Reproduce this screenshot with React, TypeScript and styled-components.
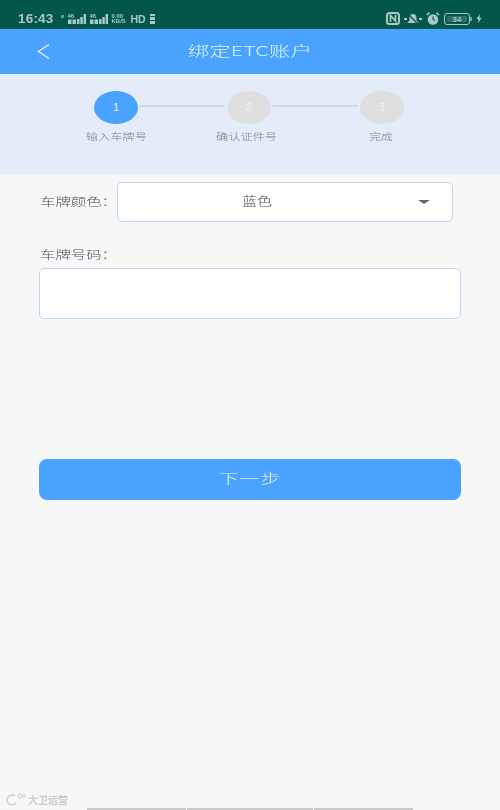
import React from "react";
import styled, { createGlobalStyle } from "styled-components";

const Global = createGlobalStyle`
  html, body { margin: 0; padding: 0; background: #f7f7f7; }
  body { font-family: "Noto Sans CJK SC", "Liberation Sans", sans-serif; }
  * { box-sizing: border-box; }
`;

const Page = styled.div`
  width: 500px;
  height: 810px;
  display: flex;
  flex-direction: column;
  background: #f7f7f7;
  overflow: hidden;
`;

const StatusBar = styled.div`
  height: 29px;
  flex: none;
  background: #03564a;
  color: #a9c9c2;
  display: flex;
  align-items: center;
  padding: 8px 18px 0 18px;
  justify-content: space-between;
  filter: blur(0.4px);
`;

const StatusGroup = styled.div<{ $gap: number }>`
  display: flex;
  align-items: center;
  gap: ${(p) => p.$gap}px;
`;

const Clock = styled.span`
  font-family: "Liberation Sans", sans-serif;
  font-size: 13.5px;
  font-weight: 700;
  letter-spacing: 0.2px;
  margin-right: 3px;
`;

const Hd = styled.span`
  font-family: "Liberation Sans", sans-serif;
  font-size: 10.5px;
  font-weight: 700;
  margin-left: -1px;
`;

const Header = styled.header`
  height: 45px;
  flex: none;
  background: #4aa3ff;
  display: flex;
  align-items: center;
  justify-content: center;
  position: relative;
`;

const BackButton = styled.span`
  position: absolute;
  left: 37px;
  top: 14px;
  display: flex;
`;

const Stretched = styled.span<{ $sx?: number }>`
  display: inline-block;
  transform: scaleX(${(p) => p.$sx ?? 1.25});
  white-space: nowrap;
`;

const LeftStretched = styled(Stretched)`
  transform-origin: left center;
`;

const Title = styled.h1`
  margin: 0 0 4px 0;
  color: #e6f2ff;
  font-size: 13.5px;
  font-weight: 300;
  line-height: 18px;
  filter: blur(0.25px);
`;

const Steps = styled.section`
  height: 100px;
  flex: none;
  background: #e3ecf8;
  display: flex;
  justify-content: center;
  padding: 17px 2px 0 0;
`;

const Step = styled.div`
  width: 44px;
  display: flex;
  flex-direction: column;
  align-items: center;
  position: relative;
`;

const Circle = styled.div<{ $active?: boolean }>`
  width: 44px;
  height: 33px;
  border-radius: 50%;
  background: ${(p) => (p.$active ? "#4aa3ff" : "#dfdfdf")};
  color: #f3f6fa;
  font-family: "Liberation Sans", sans-serif;
  font-size: 10px;
  display: flex;
  align-items: center;
  justify-content: center;
`;

const StepLabel = styled.div<{ $shift?: number }>`
  margin-top: 6px;
  margin-left: ${(p) => p.$shift ?? 0}px;
  font-size: 9px;
  line-height: 14px;
  color: #7d8288;
  font-weight: 300;
  white-space: nowrap;
  filter: blur(0.25px);
`;

const Connector = styled.div`
  width: 89px;
  height: 2px;
  margin-top: 14px;
  background: linear-gradient(to right, transparent 2px, #d3dae2 2px, #d3dae2 87px, transparent 87px);
`;

const Form = styled.main`
  flex: 1;
  display: flex;
  flex-direction: column;
  padding: 8px 39px 0 39px;
  position: relative;
`;

const ColorRow = styled.div`
  display: flex;
  align-items: center;
  height: 40px;
`;

const FieldLabel = styled.label`
  width: 78px;
  padding-left: 1px;
  padding-bottom: 2px;
  font-size: 11px;
  line-height: 16px;
  color: #4d5054;
  font-weight: 300;
  filter: blur(0.2px);
`;

const Select = styled.div`
  width: 336px;
  height: 40px;
  background: #fff;
  border: 1px solid #bcd8f5;
  border-radius: 5px;
  display: flex;
  align-items: center;
  justify-content: center;
  position: relative;
  font-size: 12px;
  font-weight: 300;
  color: #44474b;
  padding: 0 56px 3px 0;
  filter: blur(0.15px);
`;

const Caret = styled.span`
  position: absolute;
  right: 22px;
  top: 17px;
  width: 0;
  height: 0;
  border-left: 6px solid transparent;
  border-right: 6px solid transparent;
  border-top: 4px solid #66696d;
`;

const PlateLabel = styled(FieldLabel)`
  display: block;
  width: auto;
  margin-top: 24px;
  padding-bottom: 0;
`;

const PlateInput = styled.div`
  height: 51px;
  width: 422px;
  margin-top: 6px;
  background: #fff;
  border: 1px solid #bcd8f5;
  border-radius: 5px;
`;

const NextButton = styled.button`
  width: 422px;
  height: 41px;
  margin-top: 140px;
  padding: 0 0 4px 0;
  border: 0;
  border-radius: 8px;
  background: #4aa3ff;
  color: #e6f2ff;
  font-family: inherit;
  font-size: 13px;
  font-weight: 300;
  display: flex;
  align-items: center;
  justify-content: center;
`;

const Watermark = styled.div`
  position: absolute;
  left: 6px;
  bottom: 4px;
  display: flex;
  align-items: center;
  gap: 2px;
  color: #cbcbcb;
  font-size: 10px;
  line-height: 12px;
  filter: blur(0.4px);
`;

const WatermarkText = styled(Stretched)`
  font-weight: 700;
`;

const HomeBar = styled.div`
  position: absolute;
  left: 87px;
  bottom: 0;
  width: 326px;
  height: 2px;
  display: grid;
  grid-template-columns: 99px 126px 99px;
  gap: 1px;
`;

const HomeSegment = styled.span`
  background: #c9c9c9;
`;

const MiniLabel = styled.span`
  font-family: "Liberation Sans", sans-serif;
  font-size: 6px;
  line-height: 5px;
  font-weight: 700;
  white-space: nowrap;
`;

const SignalWrap = styled.span<{ $w: number }>`
  display: flex;
  flex-direction: column;
  width: ${(p) => p.$w}px;
`;

const Signal = ({ bars }: { bars: number[] }) => (
  <StatusGroup $gap={1}>
    <SignalWrap $w={8}>
      <MiniLabel>46</MiniLabel>
      <svg width="8" height="5" viewBox="0 0 8 5">
        <rect x="0" y="0.5" width="3.5" height="4.5" fill="currentColor" />
        <rect x="4.5" y="0.5" width="3.5" height="4.5" fill="currentColor" />
      </svg>
    </SignalWrap>
    <svg width="9" height="10" viewBox="0 0 9 10">
      {bars.map((h, i) => (
        <rect key={i} x={i * 3.3} y={10 - h} width="2.500" height={h} fill="currentColor" />
      ))}
    </svg>
  </StatusGroup>
);

export default function App() {
  return (
    <Page>
      <Global />
      <StatusBar>
        <StatusGroup $gap={4}>
          <Clock>16:43</Clock>
          <svg width="3" height="8" viewBox="0 0 3 8">
            <rect y="0" width="3" height="3" fill="currentColor" opacity="0.6" />
          </svg>
          <Signal bars={[5, 7, 10]} />
          <Signal bars={[5, 7, 10]} />
          <SignalWrap $w={16}>
            <MiniLabel>0.00</MiniLabel>
            <MiniLabel>KB/S</MiniLabel>
          </SignalWrap>
          <Hd>HD</Hd>
          <SignalWrap $w={5}>
            <svg width="5" height="10" viewBox="0 0 5 10" fill="currentColor">
              <rect x="0" y="0" width="5" height="2" />
              <rect x="0" y="3" width="5" height="3" />
              <rect x="0" y="7" width="5" height="3" />
            </svg>
          </SignalWrap>
        </StatusGroup>
        <StatusGroup $gap={4}>
          <svg width="14" height="13" viewBox="0 0 14 13" fill="none" stroke="currentColor">
            <rect x="1" y="1" width="12" height="11" rx="2.500" strokeWidth="2" />
            <path d="M4.500 10V3.500L9.500 9V3" strokeWidth="1.700" />
          </svg>
          <svg width="18" height="12" viewBox="0 0 18 12" fill="currentColor">
            <path d="M9 1c2.500 0 3.500 2 3.500 4v2.500L15 10H3l2.500-2.500V5c0-2 1-4 3.500-4z" />
            <path d="M0 6h3M15 6h3" stroke="currentColor" strokeWidth="2" />
            <path d="M4 1l10 10" stroke="#03564a" strokeWidth="1.300" />
          </svg>
          <svg width="14" height="13" viewBox="0 0 14 13" fill="currentColor">
            <circle cx="7" cy="7.500" r="5.300" />
            <path d="M1 3l2.500-2.300M13 3l-2.500-2.300" stroke="currentColor" strokeWidth="1.600" />
            <path d="M7 4.500v3l2 1" stroke="#03564a" strokeWidth="1.100" fill="none" />
          </svg>
          <svg width="28" height="12" viewBox="0 0 28 12" fill="none">
            <rect x="0.500" y="0.500" width="25" height="11" rx="2.500" stroke="currentColor" />
            <rect x="3" y="3" width="20" height="6" rx="1" fill="currentColor" opacity="0.25" />
            <path d="M27 4v4" stroke="currentColor" strokeWidth="1.300" />
            <text x="13" y="9" textAnchor="middle" fontFamily="Liberation Sans" fontWeight="700" fontSize="8" fill="currentColor">34</text>
          </svg>
          <svg width="6" height="9" viewBox="0 0 6 9" fill="currentColor">
            <path d="M3.800 0L0.500 5h2L2.200 9l3.300-5h-2z" />
          </svg>
        </StatusGroup>
      </StatusBar>

      <Header>
        <BackButton>
          <svg width="13" height="17" viewBox="0 0 13 17" fill="none" stroke="#e8f3ff" strokeWidth="1.300">
            <path d="M12 1.500L1.500 8.500L12 15.500" />
          </svg>
        </BackButton>
        <Title>
          <Stretched $sx={1.6}>绑定ETC账户</Stretched>
        </Title>
      </Header>

      <Steps>
        <Step>
          <Circle $active>1</Circle>
          <StepLabel><Stretched $sx={1.35}>输入车牌号</Stretched></StepLabel>
        </Step>
        <Connector />
        <Step>
          <Circle>2</Circle>
          <StepLabel $shift={-4}><Stretched $sx={1.35}>确认证件号</Stretched></StepLabel>
        </Step>
        <Connector />
        <Step>
          <Circle>3</Circle>
          <StepLabel $shift={-1}><Stretched $sx={1.3}>完成</Stretched></StepLabel>
        </Step>
      </Steps>

      <Form>
        <ColorRow>
          <FieldLabel><LeftStretched $sx={1.4}>车牌颜色：</LeftStretched></FieldLabel>
          <Select>
            <Stretched>蓝色</Stretched>
            <Caret />
          </Select>
        </ColorRow>
        <PlateLabel><LeftStretched $sx={1.4}>车牌号码：</LeftStretched></PlateLabel>
        <PlateInput />
        <NextButton><Stretched $sx={1.6}>下一步</Stretched></NextButton>
        <Watermark>
          <svg width="20" height="13" viewBox="0 0 20 13" fill="none" stroke="currentColor" strokeWidth="1.300">
            <path d="M9 3a5 5 0 1 0 1 7" />
            <circle cx="14" cy="3" r="2" strokeWidth="0.900" />
            <circle cx="18" cy="3" r="1.500" strokeWidth="0.900" />
          </svg>
          <WatermarkText $sx={1}>大卫运营</WatermarkText>
        </Watermark>
        <HomeBar>
          <HomeSegment />
          <HomeSegment />
          <HomeSegment />
        </HomeBar>
      </Form>
    </Page>
  );
}
